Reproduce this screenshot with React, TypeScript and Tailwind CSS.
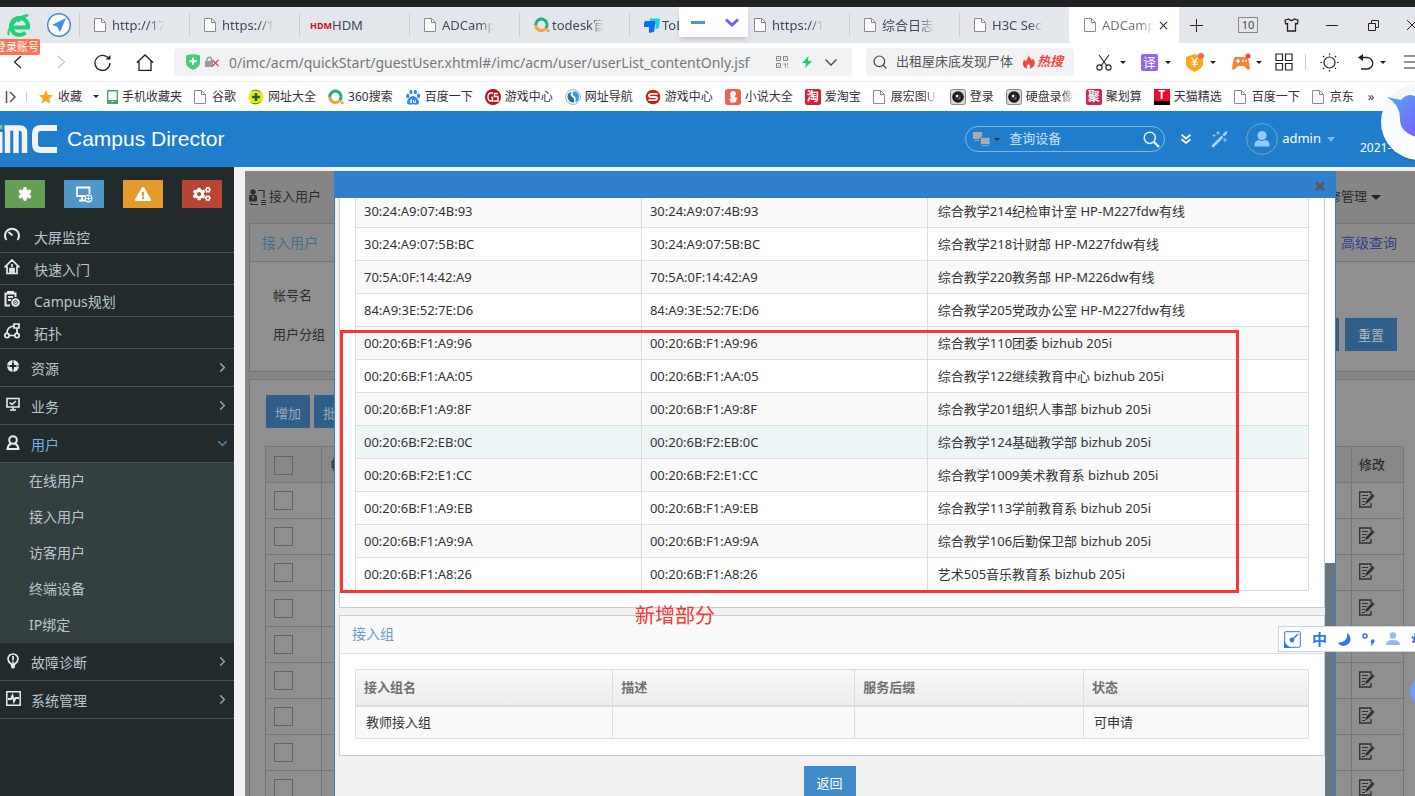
import type { ReactNode } from "react";
import { FaCogs, FaExclamationTriangle } from "react-icons/fa";
import { ChevronDown, ChevronRight, Search } from "lucide-react";

const FONT = "font-['Noto_Sans','Noto_Sans_CJK_SC',sans-serif]";

function Caret({ className = "text-[#222]" }: { className?: string }) {
  return (
    <svg viewBox="0 0 8 4" className={"h-[3px] w-[6px] shrink-0 " + className}>
      <path d="M0 0h8L4 4z" fill="currentColor" />
    </svg>
  );
}

function FileIcon() {
  return (
    <svg viewBox="0 0 12 14" className="mr-[2px] h-[14px] w-[12px] shrink-0" fill="#fff" stroke="#8a8a8a">
      <path d="M.5.5h7l4 4v9H.5z" />
      <path d="M7.5.5v4h4" fill="none" />
    </svg>
  );
}

function RingIcon() {
  return (
    <svg viewBox="0 0 16 16" className="size-4 shrink-0" fill="none" strokeWidth="3">
      <path d="M1.8 8.2a5.6 5.6 0 0 1 11.2-1" stroke="#19b37a" />
      <path d="M13 7.2a5.6 5.6 0 0 1-1.2 4" stroke="#2aa57c" />
      <path d="M1.8 8a5.6 5.6 0 0 0 10 3.4" stroke="#f7a13d" />
      <circle cx="14.2" cy="13.8" r="1.6" fill="#f7a13d" stroke="none" />
    </svg>
  );
}

function ToDeskIcon() {
  return (
    <svg viewBox="0 0 16 15" className="h-[15px] w-4 shrink-0">
      <path d="M6 .5h10l-1 9-3.500 2V6H5z" fill="#18cfe6" />
      <path d="M0 5l1-2h10v4l-1 7-5 1V9H0z" fill="#0b6cf5" />
    </svg>
  );
}

type Tab = { title: string; icon: ReactNode; active?: boolean };
const tabs: Tab[] = [
  { title: "http://17", icon: <FileIcon /> },
  { title: "https://1", icon: <FileIcon /> },
  { title: "HDM", icon: <span className="text-[9px] leading-none font-bold text-[#c8102e]">HDM</span> },
  { title: "ADCamp", icon: <FileIcon /> },
  { title: "todesk官", icon: <RingIcon /> },
  { title: "ToDesk", icon: <ToDeskIcon /> },
  { title: "https://1", icon: <FileIcon /> },
  { title: "综合日志", icon: <FileIcon /> },
  { title: "H3C Sec", icon: <FileIcon /> },
  { title: "ADCamp", icon: <FileIcon />, active: true },
];

function TabBar() {
  return (
    <div className="flex h-9 items-stretch bg-[#e3e6eb]">
      <div className="flex w-[79px] shrink-0 items-center gap-4 pl-[7px]">
        <svg viewBox="0 0 24 24" className="size-6" fill="none">
          <path d="M4 14.5h17a8.5 8.5 0 1 0-2.5 5" stroke="#1fd07e" strokeWidth="4" />
          <path d="M2 22C-1 17 10 3 21 2c-6 3-9 5-10 7" stroke="#1fd07e" strokeWidth="2" />
        </svg>
        <svg viewBox="0 0 24 24" className="size-6">
          <circle cx="12" cy="12" r="11.3" fill="#fff" stroke="#4285dc" strokeWidth="1.4" />
          <path d="M19 5L5 12l5 1.5L13 19z" fill="#3f8ef5" />
        </svg>
      </div>
      {tabs.map((t, i) => (
        <div key={i} className={"flex w-[110px] shrink-0 items-center " + (t.active ? "bg-white" : "")}>
          <span className={"h-6 w-px " + (t.active ? "" : "bg-[#cbced3]")} />
          <button className={"flex min-w-0 items-center " + (t.title === "HDM" ? "pl-2.5" : "pl-[14px]")}>
            <span className={"flex shrink-0 items-center " + (t.title === "HDM" ? "w-[22px]" : "w-[18px]")}>{t.icon}</span>
            <span
              className={
                "w-[52px] overflow-hidden text-left text-[13px] leading-5 whitespace-nowrap " +
                (t.title === "HDM" ? "" : "[mask-image:linear-gradient(to_right,black_72%,transparent)] ") +
                (t.active ? "text-[#777]" : "text-[#404a55]")
              }
            >
              {t.title}
            </span>
          </button>
          {t.active && (
            <button aria-label="关闭标签页" className="ml-[5px]">
              <svg viewBox="0 0 10 10" className="size-[9px]" stroke="#333" strokeWidth="1.2">
                <path d="M1 1l8 8M9 1L1 9" />
              </svg>
            </button>
          )}
        </div>
      ))}
      <div className="flex flex-1 items-center overflow-hidden pl-[11px] text-[#222] [&>button]:shrink-0">
        <button aria-label="新建标签页">
          <svg viewBox="0 0 13 13" className="size-[13px]" stroke="currentColor">
            <path d="M6.5 0v13M0 6.5h13" />
          </svg>
        </button>
        <button className="ml-[35px] h-4 w-5 border border-[#888] text-[11px] leading-[14px] text-[#444]">10</button>
        <button aria-label="皮肤" className="ml-[26px]">
          <svg viewBox="0 0 15 14" className="h-[14px] w-[15px]" fill="none" stroke="currentColor" strokeWidth="1.3">
            <path d="M4.500 1L1 2.200l.600 3.600L3.500 5.500V13h8V5.500l1.900.300.600-3.600L10.500 1Q7.500 4 4.500 1z" />
          </svg>
        </button>
        <button aria-label="最小化" className="ml-[27px] h-px w-3 bg-[#222]" />
        <button aria-label="还原" className="ml-[30px]">
          <svg viewBox="0 0 11 11" className="size-[11px]" fill="none" stroke="currentColor">
            <path d="M.5 3.500h7v7h-7zM3.500 3V.5h7v7H8" />
          </svg>
        </button>
        <button aria-label="关闭" className="ml-[27px]">
          <svg viewBox="0 0 12 12" className="size-3" stroke="currentColor">
            <path d="M1 1l10 10M11 1L1 11" />
          </svg>
        </button>
      </div>
    </div>
  );
}

function Toolbar() {
  return (
    <div className="flex h-[38px] items-center overflow-hidden bg-white text-[#222]">
      <div className="flex w-[174px] shrink-0 items-center pl-[10px]">
        <button aria-label="后退" className="w-[42px]">
          <svg viewBox="0 0 9 14" className="ml-[3px] h-[14px] w-[9px]" fill="none" stroke="#222" strokeWidth="1.2">
            <path d="M8 1L1.500 7 8 13" />
          </svg>
        </button>
        <button aria-label="前进" className="w-[42px]">
          <svg viewBox="0 0 9 14" className="ml-[5px] h-[14px] w-[9px]" fill="none" stroke="#c4c4c4" strokeWidth="1.2">
            <path d="M1 1l6.500 6L1 13" />
          </svg>
        </button>
        <button aria-label="刷新" className="w-[42px]">
          <svg viewBox="0 0 17 17" className="size-[17px]" fill="none" stroke="#222" strokeWidth="1.3">
            <path d="M15 5.200A7.500 7.500 0 1 0 16 9" />
            <path d="M11.500 5.500h5V1z" fill="#222" stroke="none" />
          </svg>
        </button>
        <button aria-label="主页">
          <svg viewBox="0 0 18 17" className="h-[17px] w-[18px]" fill="none" stroke="#222" strokeWidth="1.3">
            <path d="M.8 8.800L9 1l8.200 7.800M3 7v9.300h12V7" />
          </svg>
        </button>
      </div>
      <div className="flex h-7 flex-1 items-center rounded bg-[#f0f2f3] pr-[15px] pl-3">
        <svg viewBox="0 0 14 16" className="h-4 w-[14px] shrink-0">
          <path d="M0 1.500Q7-1 14 1.500V9q0 4-7 7Q0 13 0 9z" fill="#42cf78" />
          <path d="M7 3.800v7M3.500 7.300h7" stroke="#fff" strokeWidth="2" />
        </svg>
        <svg viewBox="0 0 15 12" className="ml-[5px] h-3 w-[15px] shrink-0" fill="none">
          <path d="M0 5h8v6H0z" fill="#9a9a9a" />
          <path d="M2 5V3.500a2.200 2.200 0 0 1 4.500 0V5" stroke="#9a9a9a" strokeWidth="1.400" />
          <path d="M7.500 4l6 6M13.500 4l-6 6" stroke="#d8484c" strokeWidth="1.200" />
        </svg>
        <input
          aria-label="地址栏"
          defaultValue="0/imc/acm/quickStart/guestUser.xhtml#/imc/acm/user/userList_contentOnly.jsf"
          className="ml-[9px] min-w-0 flex-1 bg-transparent text-[14px] text-[#777] outline-none"
        />
        <button aria-label="二维码">
          <svg viewBox="0 0 12 12" className="size-3" fill="none" stroke="#888">
            <path d="M.5.5h4v4h-4zM7.500.5h4v4h-4zM.5 7.500h4v4h-4zM7.500 8h2v3.500M11.500 7v2M11.500 10.500v1M2 2.500h1M9 2.500h1M2 9.500h1" />
          </svg>
        </button>
        <svg viewBox="0 0 10 12" className="ml-[14px] h-3 w-[10px] shrink-0" fill="#1fcf6c">
          <path d="M6.500 0L0 7h4l-1 5 7-7H6z" />
        </svg>
        <button aria-label="展开" className="ml-[13px]">
          <svg viewBox="0 0 12 7" className="h-[7px] w-3" fill="none" stroke="#444" strokeWidth="1.300">
            <path d="M.5.5L6 6 11.500.5" />
          </svg>
        </button>
      </div>
      <div className="ml-[14px] flex h-7 w-[208px] shrink-0 items-center rounded bg-[#f0f2f3] pl-[6px]">
        <Search className="size-4 shrink-0 text-[#444]" strokeWidth={1.8} />
        <input
          aria-label="搜索"
          defaultValue="出租屋床底发现尸体"
          className="ml-2 w-[118px] bg-transparent text-[13px] text-[#555] outline-none"
        />
        <svg viewBox="0 0 14 15" className="ml-2 h-[14px] w-[13px]" fill="#f5483f">
          <path d="M7 0c1 3 3 4 3.500 5.500L12 4c4 5 1 9-3.500 11 1-3 0-4-1.500-6-1 2-3 3-1.500 6C0 13 0 8 2.500 5L4 7c1-2 3-4 3-7z" />
        </svg>
        <span className="ml-[2px] text-[13px] font-bold text-[#f5483f] italic">热搜</span>
      </div>
      <div className="ml-[22px] flex w-[319px] shrink-0 items-center [&>*]:shrink-0">
        <button aria-label="截图" className="flex w-[45px] items-center gap-2">
          <svg viewBox="0 0 16 17" className="h-[17px] w-4" fill="none" stroke="#222" strokeWidth="1.100">
            <path d="M3 1l8 11M13 1L5 12" />
            <circle cx="3.500" cy="13.500" r="2.600" />
            <circle cx="12.500" cy="13.500" r="2.600" />
          </svg>
          <Caret />
        </button>
        <button className="flex w-[45px] items-center gap-[7px]">
          <span className="size-[17px] rounded-[2px] bg-[#9266f0] text-[13px] leading-[17px] text-white">译</span>
          <Caret />
        </button>
        <button aria-label="钱包" className="flex w-[45px] items-center gap-1.5">
          <svg viewBox="0 0 18 19" className="h-[19px] w-[18px]">
            <path d="M0 4l8.500-3L17 4v7q0 4-8.500 8Q0 15 0 11z" fill="#fba71b" />
            <path d="M5.500 4.500l3 4 3-4M8.500 8.500V14M5.500 9h6M5.500 11.300h6" stroke="#fff" strokeWidth="1.200" fill="none" />
            <circle cx="15" cy="3" r="3" fill="#fb6161" />
          </svg>
          <Caret />
        </button>
        <button aria-label="游戏" className="flex w-[44px] items-center gap-[5px]">
          <svg viewBox="0 0 20 18" className="h-[18px] w-5">
            <path d="M4 4h12q2 2 3 12-2 2-4-1l-2-2H7l-2 2q-2 3-4 1Q2 6 4 4z" fill="#fb8332" />
            <path d="M7 6v4M5 8h4" stroke="#fff" strokeWidth="1.500" />
            <circle cx="12" cy="8" r="1" fill="#fff" />
            <circle cx="15" cy="8" r="1" fill="#fff" />
            <circle cx="17" cy="3" r="2.500" fill="#f5453c" />
          </svg>
          <Caret />
        </button>
        <button aria-label="应用" className="mr-3">
          <svg viewBox="0 0 18 18" className="size-[18px]" fill="none" stroke="#222" strokeWidth="1.200">
            <path d="M1 1h6.500v6.500H1zM10.500 1H17v6.500h-6.500zM1 10.500h6.500V17H1zM10.500 10.500H17V17h-6.500z" />
          </svg>
        </button>
        <span className="mr-[14px] h-4 w-px bg-[#ccc]" />
        <button aria-label="亮度" className="mr-[19px]">
          <svg viewBox="0 0 19 19" className="size-[19px]" fill="none" stroke="#222" strokeWidth="1.200">
            <circle cx="9.500" cy="9.500" r="5.500" />
            <path d="M9.500.5v1.500M9.500 17v1.500M.5 9.500H2M17 9.500h1.500M3 3l1.200 1.200M14.800 14.800L16 16M3 16l1.200-1.200M14.800 4.200L16 3" />
          </svg>
        </button>
        <button aria-label="恢复" className="flex items-center gap-[6px]">
          <svg viewBox="0 0 16 16" className="size-4 shrink-0" fill="none" stroke="#222" strokeWidth="1.300">
            <path d="M2 3.500h7a5.500 5.500 0 0 1 0 11.500H3" />
            <path d="M0 3.500L5 0v7z" fill="#222" stroke="none" />
          </svg>
          <Caret />
        </button>
        <button aria-label="菜单" className="ml-[18px]">
          <svg viewBox="0 0 14 14" className="h-[14px] w-[14px]" stroke="#222" strokeWidth="1.200">
            <path d="M0 1h14M0 7h14M0 13h14" />
          </svg>
        </button>
      </div>
    </div>
  );
}

function Disc({ className, children }: { className: string; children: ReactNode }) {
  return (
    <span className={"flex size-4 shrink-0 items-center justify-center text-[12px] leading-none font-bold text-white " + className}>
      {children}
    </span>
  );
}

function Camera() {
  return (
    <svg viewBox="0 0 16 16" className="size-4 shrink-0">
      <rect x=".5" y=".5" width="15" height="15" rx="2" fill="#d8d8d8" stroke="#888" />
      <circle cx="8" cy="8" r="5.800" fill="#1c1c1c" />
      <circle cx="8" cy="8" r="3" fill="#4b3038" />
      <circle cx="7" cy="7" r="1.200" fill="#fff" />
      <circle cx="9.500" cy="9.500" r="1" fill="#2da0a0" />
    </svg>
  );
}

const bookmarks: { label: string; icon: ReactNode }[] = [
  {
    label: "手机收藏夹",
    icon: (
      <svg viewBox="0 0 11 14" className="h-[14px] w-[11px] shrink-0">
        <path d="M.7.7h9.600v12.600H.7z" fill="#fff" stroke="#4aa56b" strokeWidth="1.400" />
        <path d="M1 10h9v3H1z" fill="#4aa56b" />
        <path d="M4.500 11.500h2" stroke="#fff" />
      </svg>
    ),
  },
  { label: "谷歌", icon: <FileIcon /> },
  {
    label: "网址大全",
    icon: (
      <svg viewBox="0 0 16 16" className="size-4 shrink-0">
        <circle cx="8" cy="8" r="7.600" fill="#f2e31c" />
        <path d="M2 3a8 8 0 0 1 12 1Q8 0 2 3zM2 13a8 8 0 0 0 12-1q-6 4-12 1z" fill="#2e9a2a" />
        <path d="M8 4v8M4 8h8" stroke="#0d6b20" strokeWidth="2.600" />
      </svg>
    ),
  },
  { label: "360搜索", icon: <RingIcon /> },
  {
    label: "百度一下",
    icon: (
      <svg viewBox="0 0 16 16" className="size-4 shrink-0" fill="#3388f0">
        <ellipse cx="2.800" cy="7" rx="1.700" ry="2.300" />
        <ellipse cx="6" cy="3" rx="1.600" ry="2.300" />
        <ellipse cx="10.300" cy="3" rx="1.600" ry="2.300" />
        <ellipse cx="13.500" cy="6.800" rx="1.700" ry="2.200" />
        <path d="M8 7c3 0 6 4 6 6.500s-3 2.500-6 1.800c-3 .7-6 .7-6-1.800S5 7 8 7z" />
        <path d="M6.500 10v3.500H5.300v-2M8.500 11v2.500h2V11" stroke="#fff" fill="none" strokeWidth=".9" />
      </svg>
    ),
  },
  {
    label: "游戏中心",
    icon: (
      <svg viewBox="0 0 16 16" className="size-4 shrink-0" fill="none">
        <circle cx="8" cy="8" r="8" fill="#b8141f" />
        <path d="M8 4H6Q3 4 3 8t3 4h1.500V8.500H6M13 4.500H9.500v3H13V12H8.500" stroke="#fff" strokeWidth="1.400" />
      </svg>
    ),
  },
  {
    label: "网址导航",
    icon: (
      <svg viewBox="0 0 16 16" className="size-4 shrink-0" fill="none">
        <circle cx="8" cy="8" r="7.400" fill="#fff" stroke="#aaa" />
        <path d="M8 2.500A3 3 0 0 0 6 7q4 2 3 6.500A6 6 0 0 1 3 5q2-2.500 5-2.500z" fill="#1b6fb5" />
        <path d="M9 2q5 1 5 6t-4 5q2-4-1-6t0-5z" fill="#3a9fd8" />
      </svg>
    ),
  },
  {
    label: "游戏中心",
    icon: (
      <svg viewBox="0 0 16 16" className="size-4 shrink-0" fill="none">
        <circle cx="8" cy="8" r="7.300" fill="#c9230f" />
        <path d="M12.500 4.800H6.500q-2.500 0-2.500 1.600T6 8h4q2 0 2 1.500T9.500 11.200H3.500" stroke="#fff" strokeWidth="1.800" />
      </svg>
    ),
  },
  {
    label: "小说大全",
    icon: (
      <Disc className="rounded-[3px] bg-[#f0604a]">
        <svg viewBox="0 0 12 12" className="size-3" fill="#fff">
          <path d="M3 4q0-4 3-4t3 3l-2 4H4zM2 8l8-2-1 5-5 1z" />
        </svg>
      </Disc>
    ),
  },
  { label: "爱淘宝", icon: <Disc className="rounded-[2px] bg-[#dd1c2d]">淘</Disc> },
  { label: "展宏图U", icon: <FileIcon /> },
  { label: "登录", icon: <Camera /> },
  { label: "硬盘录像", icon: <Camera /> },
  { label: "聚划算", icon: <Disc className="rounded-[2px] bg-[#cf2552]">聚</Disc> },
  { label: "天猫精选", icon: <Disc className="border-b-4 border-black bg-[#f00a2b]">T</Disc> },
  { label: "百度一下", icon: <FileIcon /> },
  { label: "京东", icon: <FileIcon /> },
];

function Bookmarks() {
  return (
    <nav className="flex h-[30px] items-center overflow-hidden border-t border-[#e9ebec] bg-white text-[12px] whitespace-nowrap text-[#333]">
      <svg viewBox="0 0 12 12" className="ml-[5px] h-3 w-3 shrink-0" fill="none" stroke="#555" strokeWidth="1.500">
        <path d="M1.500 0v12M5 1l5 5-5 5" />
      </svg>
      <span className="mr-3 ml-[9px] h-[10px] w-px bg-[#ccc]" />
      <button className="mr-2 flex items-center gap-[5px]">
        <svg viewBox="0 0 14 14" className="size-[14px]" fill="#f9a81c">
          <path d="M7 0l2.100 4.700 4.900.5-3.700 3.300 1.100 5L7 11l-4.400 2.500 1.100-5L0 5.200l4.900-.5z" />
        </svg>
        收藏
        <Caret className="ml-1.5 text-[#222]" />
      </button>
      <div className="flex items-center gap-3">
        {bookmarks.map((b, i) => (
          <a key={i} href="#" className="flex shrink-0 items-center gap-1">
            {b.icon}
            <span
              className={
                b.label === "展宏图U"
                  ? "w-[47px] [mask-image:linear-gradient(to_right,black_70%,transparent)]"
                  : b.label === "硬盘录像"
                    ? "[mask-image:linear-gradient(to_right,black_75%,transparent)]"
                    : ""
              }
            >
              {b.label}
            </span>
          </a>
        ))}
      </div>
      <button className="ml-[14px] text-[13px]">»</button>
    </nav>
  );
}

function AppHeader() {
  return (
    <header className="flex h-14 items-center overflow-hidden bg-[#207dcc] text-white">
      <svg viewBox="0 0 57 30" className="h-[30px] w-[57px] shrink-0" fill="none" stroke="#f1f3f4">
        <path d="M0 8v21" strokeWidth="5" />
        <path d="M0 3h2.500" stroke="#8fc76c" strokeWidth="4" />
        <path d="M4.500 4h15q5 0 5 5v20M7.500 4v25M16 4v25" strokeWidth="5.500" />
        <path d="M57 4H41q-6 0-6 6v10q0 6 6 6h16" strokeWidth="6" />
      </svg>
      <h1 className="ml-[10px] font-['Liberation_Sans',sans-serif] text-[21px] leading-7">Campus Director</h1>
      <div className="ml-auto flex h-[26px] w-[200px] items-center rounded-full border border-[#7fb6e6] pl-[7px]">
        <svg viewBox="0 0 17 16" className="h-4 w-[17px] shrink-0" fill="#a9abad">
          <path d="M0 1h9v7H0zM2 9h4v1H2z" />
          <path d="M7.500 6.500H17v7H7.500zM9 14h7v1.500H9z" stroke="#207dcc" strokeWidth=".6" />
        </svg>
        <Caret className="ml-1 text-[#2c3338]" />
        <input
          aria-label="查询设备"
          placeholder="查询设备"
          className="ml-[9px] min-w-0 flex-1 bg-transparent text-[13px] outline-none placeholder:text-[#c8e0f5]"
        />
        <button aria-label="搜索设备" className="mr-1">
          <svg viewBox="0 0 17 17" className="size-[17px]" fill="none" stroke="#e8f3fc">
            <circle cx="6.800" cy="6.800" r="5.600" strokeWidth="1.500" />
            <path d="M11 11l5 5" strokeWidth="2.400" />
          </svg>
        </button>
      </div>
      <button aria-label="更多" className="ml-4">
        <svg viewBox="0 0 10 10" className="size-[10px]" fill="none" stroke="#fff" strokeWidth="1.800">
          <path d="M.5.8L5 4.500 9.500.8M.5 5.300L5 9l4.500-3.700" />
        </svg>
      </button>
      <button aria-label="向导" className="ml-5">
        <svg viewBox="0 0 18 18" className="size-[18px]" fill="#a8d4f7">
          <path d="M1 15l9.500-9.500 2 2L3 17q-1 .8-1.800 0T1 15zM11.300 4.700l3-3q.9-.7 1.700.1t0 1.800l-2.800 3z" />
          <path d="M7 1v4M5 3h4M3 4v3M1.500 5.500h3M14 8v4M12 10h4" stroke="#a8d4f7" strokeWidth=".8" />
        </svg>
      </button>
      <button className="ml-[17px] flex items-center">
        <svg viewBox="0 0 32 32" className="size-8">
          <circle cx="16" cy="16" r="15.400" fill="none" stroke="#6aa9bf" />
          <circle cx="16" cy="12.500" r="4.600" fill="#93ccff" />
          <path d="M8.500 23.500v-2q0-3.500 4-4.500 3.500 2 7 0 4 1 4 4.500v2z" fill="#93ccff" />
        </svg>
        <span className="ml-1 text-[13px]">admin</span>
        <svg viewBox="0 0 8 5" className="ml-1.5 h-[5px] w-2" fill="#7fb8ea">
          <path d="M0 0h8L4 5z" />
        </svg>
      </button>
      <div className="ml-6 w-14 shrink-0 pl-px text-[12px] leading-[17px]">
        <div className="pl-5">17:32</div>
        <div>2021-11</div>
      </div>
    </header>
  );
}

const iconBase = { fill: "none", stroke: "#e8ecec", strokeWidth: 2 } as const;

const topMenu: { label: string; icon: ReactNode }[] = [
  {
    label: "大屏监控",
    icon: (
      <svg viewBox="0 0 16 16" className="size-4" {...iconBase}>
        <path d="M2.500 13a7 7 0 1 1 11 0M8.500 8.500L4.500 5" />
      </svg>
    ),
  },
  {
    label: "快速入门",
    icon: (
      <svg viewBox="0 0 16 16" className="size-4" {...iconBase} strokeWidth={1.700}>
        <path d="M.5 8.500L8 1l7.500 7.500M3 7v7.500h10V7M8 5v3M6 14V9.500h4V14M8 10v4M6 11.500h4" />
      </svg>
    ),
  },
  {
    label: "Campus规划",
    icon: (
      <svg viewBox="0 0 16 16" className="size-4" {...iconBase} strokeWidth={2}>
        <path d="M6 14.500H1.500v-12h10V6M4 2V1h5v1M4 6h5M4 9h3" />
        <circle cx="11.500" cy="11.500" r="3.300" />
        <circle cx="11.500" cy="11.500" r=".5" />
      </svg>
    ),
  },
  {
    label: "拓扑",
    icon: (
      <svg viewBox="0 0 16 16" className="size-4" {...iconBase} strokeWidth={1.700}>
        <circle cx="3" cy="12.500" r="2.200" />
        <circle cx="13" cy="12.500" r="2.200" />
        <path d="M10 1h5v4h-5zM9.500 3Q3 4 3 10M13 5v5M5.500 12.500h5" />
      </svg>
    ),
  },
];

type Group = { label: string; icon: ReactNode; children?: string[] };
const groups: Group[] = [
  {
    label: "资源",
    icon: (
      <svg viewBox="0 0 14 14" className="size-[14px]">
        <circle cx="7" cy="7" r="6" fill="#e8ecec" />
        <path d="M7 1v3.500M7 9.500V13M1 7h3.500M9.500 7H13" stroke="#222a2c" strokeWidth="1" />
        <path d="M7 4v6M4 7h6" stroke="#222a2c" strokeWidth="2" />
      </svg>
    ),
  },
  {
    label: "业务",
    icon: (
      <svg viewBox="0 0 14 14" className="size-[14px]" {...iconBase} strokeWidth={1.600}>
        <path d="M1 1.500h12v8.500H1zM4 13h6M7 10v3M3.500 5.500l2.500 2 4-3.500" />
      </svg>
    ),
  },
  {
    label: "用户",
    icon: (
      <svg viewBox="0 0 14 16" className="h-4 w-[14px]" {...iconBase}>
        <circle cx="7" cy="5" r="3.800" />
        <path d="M5 8.500Q2 10 1.500 14h11Q12 10 9 8.500" />
      </svg>
    ),
    children: ["在线用户", "接入用户", "访客用户", "终端设备", "IP绑定"],
  },
  {
    label: "故障诊断",
    icon: (
      <svg viewBox="0 0 14 16" className="h-4 w-[14px]" {...iconBase} strokeWidth={1.700}>
        <path d="M5 11Q2 8.500 2 6a5 5 0 0 1 10 0q0 2.500-3 5zM7 3v4.500M7 8.500V10" />
        <path d="M5 11h4v3l-1 1.500H6L5 14z" fill="#e8ecec" stroke="none" />
      </svg>
    ),
  },
  {
    label: "系统管理",
    icon: (
      <svg viewBox="0 0 15 15" className="h-[15px] w-[15px]" {...iconBase} strokeWidth={1.500}>
        <path d="M.8.8h13.400v13.400H.8z" />
        <path d="M2 8h3l1.500-3.500 1.500 6L9.500 7H13" strokeWidth="1.800" />
      </svg>
    ),
  },
];

function Sidebar() {
  return (
    <aside className="w-[234px] shrink-0 bg-[#222a2c] text-[14px] text-[#b9c7cc]">
      <div className="flex gap-[19px] pt-[13px] pb-[13px] pl-[5px] text-white">
        <button aria-label="快捷" className="flex h-7 w-10 items-center justify-center bg-[#659f57]">
          <svg viewBox="0 0 16 16" className="size-4" stroke="#fff" strokeWidth="3.800" strokeLinecap="round">
            <path d="M8 3v10M3.600 5.500l8.800 5M12.400 5.500l-8.800 5" />
          </svg>
        </button>
        <button aria-label="添加设备" className="flex h-7 w-10 items-center justify-center bg-[#4d98c8]">
          <svg viewBox="0 0 17 17" className="size-[17px]" fill="none" stroke="#fff" strokeWidth="1.800">
            <path d="M9 10H1V1.500h12.500V8M3 14.500h6M6 10v4" />
            <circle cx="12.500" cy="12.500" r="3.300" strokeWidth="1.200" />
            <path d="M12.500 10.500v4M10.500 12.500h4" strokeWidth="1.200" />
          </svg>
        </button>
        <button aria-label="告警" className="flex h-7 w-10 items-center justify-center bg-[#e59a2d]">
          <FaExclamationTriangle className="size-4" />
        </button>
        <button aria-label="设置" className="flex h-7 w-10 items-center justify-center bg-[#b74635]">
          <FaCogs className="size-[18px]" />
        </button>
      </div>
      <ul>
        {topMenu.map((m) => (
          <li key={m.label} className="border-b border-[#4b5556]">
            <a href="#" className="flex h-[31px] gap-[14px] pl-1">
              <span className="pt-[6px]">{m.icon}</span>
              <span className="pt-[7px] leading-5">{m.label}</span>
            </a>
          </li>
        ))}
        {groups.map((g) => (
          <li key={g.label}>
            <a href="#" className="flex h-[38px] border-b border-[#4b5556] pr-[6px] pl-[6px]">
              <span className="w-[25px] pt-[10px]">{g.icon}</span>
              <span className={"flex-1 pt-[10px] leading-5 " + (g.children ? "text-[#6cb5e8]" : "")}>{g.label}</span>
              {g.children ? (
                <ChevronDown className="mt-[11px] -mr-[2px] size-[15px] text-[#4f7f9c]" strokeWidth={2.500} />
              ) : (
                <ChevronRight className="mt-[11px] -mr-[2px] size-[15px] text-[#99a5a8]" strokeWidth={2.500} />
              )}
            </a>
            {g.children && (
              <ul className="bg-[#343f40]">
                {g.children.map((c) => (
                  <li key={c}>
                    <a href="#" className="block h-9 pl-[29px] leading-9">
                      {c}
                    </a>
                  </li>
                ))}
              </ul>
            )}
          </li>
        ))}
      </ul>
    </aside>
  );
}

function EditIcon() {
  return (
    <svg viewBox="0 0 16 17" className="h-[17px] w-4" fill="none" stroke="#303030">
      <path d="M12 4V1H.7v15H12v-4" strokeWidth="1.300" />
      <path d="M3 4.500h6M3 7.500h5M3 10.500h3M3 13.500h3" />
      <path d="M6 13l1-3 6.500-7 2 2-6.500 7z" fill="#303030" stroke="none" />
    </svg>
  );
}

function UserListPage() {
  return (
    <div className="h-full overflow-hidden bg-[#858585] pl-1 text-[13px] text-[#2c2c2c]">
      <div className="flex h-[52px] items-center">
        <svg viewBox="0 0 17 17" className="h-[17px] w-[17px]" fill="none" stroke="#2c2c2c">
          <circle cx="4" cy="3" r="2.300" fill="#2c2c2c" />
          <path d="M.5 12V7q0-.5 1-.5h5q1 0 1 .5v5z" fill="#2c2c2c" />
          <path d="M3 7l1 4 1-4" fill="#858585" stroke="none" />
          <path d="M9 1.500h6V9M2 14v1.500h7M12 11.500h5M12 13.500h5M12 15.500h5" strokeWidth="1.200" />
        </svg>
        <span className="ml-[3px]">接入用户</span>
        <button className="mr-[34px] ml-auto flex items-center gap-1">
          检修管理
          <svg viewBox="0 0 10 5" className="h-[5px] w-[10px]" fill="#222">
            <path d="M0 0h10L5 5z" />
          </svg>
        </button>
      </div>
      <section className="h-[149px] border border-r-0 border-[#747474] bg-[#8f8f8f]">
        <div className="flex h-[38px] items-center justify-between border-b border-[#747474] bg-[#8b8b8b] pr-[18px] pl-3 text-[14px]">
          <h2 className="text-[#40708c]">接入用户</h2>
          <a href="#" className="text-[#343f86]">高级查询</a>
        </div>
        <div className="flex justify-between pt-[14px] pr-[18px] pl-[23px]">
          <div>
            <div className="h-[39px] leading-[38px]">帐号名</div>
            <div className="h-[39px] leading-[38px]">用户分组</div>
          </div>
          <div className="mt-[42px] flex gap-[6px]">
            <button className="h-[33px] w-[52px] bg-[#2f5e88] pt-[2px] text-[#aeb4b9]">查询</button>
            <button className="h-[33px] w-[52px] bg-[#2f5e88] pt-[2px] text-[#aeb4b9]">重置</button>
          </div>
        </div>
      </section>
      <section className="mt-[7px] h-[500px] border border-r-0 border-[#747474] bg-[#8f8f8f] pt-[15px] pr-[11px] pl-[15px]">
        <div className="flex gap-1 pl-px">
          <button className="h-[33px] w-11 bg-[#2f5e88] pt-1 text-[#a3a9ad]">增加</button>
          <button className="h-[33px] bg-[#2f5e88] px-[9px] pt-1 text-[#a3a9ad]">批量导入</button>
        </div>
        <table className="mt-[18px] w-full table-fixed border-collapse [&_td]:border [&_td]:border-[#777] [&_th]:border [&_th]:border-[#777]">
          <thead>
            <tr className="h-9 bg-[#888]">
              <th className="w-14 pt-[2px] pl-2 text-left">
                <input type="checkbox" aria-label="全选" className="block size-[19px] appearance-none border border-[#636363]" />
              </th>
              <th className="pl-[9px] text-left">帐号名</th>
              <th className="w-20" />
              <th className="w-[52px] pl-[7px] text-left font-medium">修改</th>
            </tr>
          </thead>
          <tbody>
            {Array.from({ length: 9 }, (_, i) => (
              <tr key={i} className="h-9">
                <td className="pl-2">
                  <input
                    type="checkbox"
                    aria-label={"选择第" + (i + 1) + "行"}
                    className="block size-[19px] appearance-none border border-[#636363]"
                  />
                </td>
                <td />
                <td />
                <td className="pb-[2px] pl-[7px]">
                  <button aria-label="修改" className="block">
                    <EditIcon />
                  </button>
                </td>
              </tr>
            ))}
          </tbody>
        </table>
      </section>
    </div>
  );
}

const rows: [string, string][] = [
  ["30:24:A9:07:4B:93", "综合教学214纪检审计室 HP-M227fdw有线"],
  ["30:24:A9:07:5B:BC", "综合教学218计财部 HP-M227fdw有线"],
  ["70:5A:0F:14:42:A9", "综合教学220教务部 HP-M226dw有线"],
  ["84:A9:3E:52:7E:D6", "综合教学205党政办公室 HP-M227fdw有线"],
  ["00:20:6B:F1:A9:96", "综合教学110团委 bizhub 205i"],
  ["00:20:6B:F1:AA:05", "综合教学122继续教育中心 bizhub 205i"],
  ["00:20:6B:F1:A9:8F", "综合教学201组织人事部 bizhub 205i"],
  ["00:20:6B:F2:EB:0C", "综合教学124基础教学部 bizhub 205i"],
  ["00:20:6B:F2:E1:CC", "综合教学1009美术教育系 bizhub 205i"],
  ["00:20:6B:F1:A9:EB", "综合教学113学前教育系 bizhub 205i"],
  ["00:20:6B:F1:A9:9A", "综合教学106后勤保卫部 bizhub 205i"],
  ["00:20:6B:F1:A8:26", "艺术505音乐教育系 bizhub 205i"],
];

function Modal() {
  return (
    <div className="absolute top-0 right-[79px] bottom-0 left-[89px] flex flex-col border-x border-[#2f80c8] bg-[#f1f1f1] text-[13px] text-[#333]">
      <div className="flex h-[27px] shrink-0 items-center justify-end bg-[#3180cd] pr-[10px]">
        <button aria-label="关闭对话框" className="pt-[3px]">
          <svg viewBox="0 0 10 10" className="size-[10px]" stroke="#56595e" strokeWidth="3">
            <path d="M1.200 1.200l7.600 7.600M8.800 1.200L1.200 8.800" />
          </svg>
        </button>
      </div>
      <div className="flex min-h-0 flex-1">
        <div className="min-w-0 flex-1 overflow-hidden pl-1">
          <section className="border border-t-0 border-[#ccc] bg-white px-[15px] pb-4">
            <table className="-mt-1 w-full table-fixed border-collapse">
              <tbody>
                {rows.map(([mac, desc], i) => (
                  <tr
                    key={mac}
                    className={
                      "h-[33px] [&_td]:border [&_td]:border-[#ddd] [&_td]:pt-[2px] " +
                      (i === 7 ? "bg-[#eef5f7]" : i % 2 ? "bg-white" : "bg-[#f9f9f9]")
                    }
                  >
                    <td className="w-[30%] pl-2">{mac}</td>
                    <td className="w-[30%] pl-2">{mac}</td>
                    <td className="pl-[10px]">{desc}</td>
                  </tr>
                ))}
              </tbody>
            </table>
          </section>
          <section className="mt-[7px] border border-[#ccc] bg-white">
            <h2 className="h-[38px] border-b border-[#ddd] bg-[#f9f9f9] pl-3 text-[14px] leading-[36px] text-[#669fc7]">接入组</h2>
            <div className="px-[15px] pt-[15px] pb-4">
              <table className="w-full table-fixed border-collapse [&_td]:border [&_td]:border-[#ddd] [&_th]:border [&_th]:border-b-2 [&_th]:border-[#ddd]">
                <thead>
                  <tr className="h-9 bg-linear-to-b from-[#f9f9f9] to-[#ebebeb] text-left text-[#707070] [&_th]:pl-2 [&_th]:font-bold">
                    <th className="w-[27%]">接入组名</th>
                    <th>描述</th>
                    <th className="w-[24%]">服务后缀</th>
                    <th className="w-[225px]">状态</th>
                  </tr>
                </thead>
                <tbody>
                  <tr className="h-[33px] bg-[#f9f9f9] [&_td]:pl-[10px]">
                    <td>教师接入组</td>
                    <td />
                    <td />
                    <td>可申请</td>
                  </tr>
                </tbody>
              </table>
            </div>
          </section>
          <div className="mt-[10px] flex justify-center pr-[5px]">
            <button className="h-9 w-[52px] bg-[#428bca] text-white">返回</button>
          </div>
        </div>
        <div className="w-[10px] shrink-0 bg-white pt-[365px]">
          <div className="h-full bg-[#687782]" />
        </div>
      </div>
      <div className="absolute top-[159px] right-[96px] left-[5px] h-[263px] border-[3px] border-[#fd3434]" />
      <div className="absolute top-[431px] left-[300px] text-[20px] leading-7 text-[#fd3434]">新增部分</div>
    </div>
  );
}

function ImeBar() {
  return (
    <div className="absolute top-[626px] right-0 flex h-[26px] w-[137px] items-center gap-[11px] overflow-hidden border border-r-0 border-[#ccd3dc] bg-white pl-[5px] text-[#2f76e6]">
      <svg viewBox="0 0 17 17" className="size-[17px] shrink-0" fill="none" stroke="currentColor">
        <rect x=".7" y=".7" width="15.600" height="15.600" rx="1" />
        <path d="M0 9q2 6 8 8H0z" fill="currentColor" stroke="none" />
        <path d="M8 9l6-6" strokeWidth="1.300" />
        <circle cx="8" cy="9" r="2" fill="currentColor" />
      </svg>
      <span className="text-[15px] font-bold">中</span>
      <svg viewBox="0 0 13 13" className="h-[13px] w-[13px] shrink-0" fill="currentColor">
        <path d="M9 0c6 4 4 12-3 13-3 0-5-1.500-6-3.500C6 10 10 6 9 0z" />
      </svg>
      <svg viewBox="0 0 13 13" className="h-[13px] w-[13px] shrink-0" fill="currentColor">
        <circle cx="3" cy="3" r="2" fill="none" stroke="currentColor" strokeWidth="1.600" />
        <path d="M12.500 7q0 4-4.500 6 1.500-1.500 1.500-2.500A2.300 2.300 0 1 1 12.500 7z" />
      </svg>
      <svg viewBox="0 0 14 14" className="h-[14px] w-[14px] shrink-0" fill="#94b8f4">
        <circle cx="7" cy="3.500" r="3.200" />
        <path d="M0 13q0-5 7-5t7 5z" />
      </svg>
      <svg viewBox="0 0 14 14" className="h-[14px] w-[14px] shrink-0" fill="none" stroke="currentColor">
        <circle cx="7" cy="7" r="3.500" strokeWidth="2.500" />
        <circle cx="7" cy="7" r="5.500" strokeWidth="2" strokeDasharray="2.200 2.100" />
      </svg>
    </div>
  );
}

export default function App() {
  return (
    <div className={"relative flex h-screen flex-col overflow-hidden bg-[#f2f2f2] " + FONT}>
      <div className="h-[7px] shrink-0 bg-[#222]" />
      <div className="shrink-0">
        <TabBar />
        <Toolbar />
        <Bookmarks />
        <AppHeader />
      </div>
      <div className="flex min-h-0 flex-1">
        <Sidebar />
        <main className="relative mt-1 ml-[11px] min-w-0 flex-1">
          <UserListPage />
          <Modal />
        </main>
      </div>

      <div className="absolute top-[39px] left-0 flex h-4 w-10 justify-end overflow-hidden rounded-r-xs bg-[#fc7452] pr-px text-[11px] leading-4 whitespace-nowrap text-white">
        登录账号
      </div>
      <div className="absolute top-[7px] left-[679px] flex h-[30px] w-[69px] items-center justify-between bg-white pr-[9px] pl-3 shadow-md">
        <button aria-label="收起" className="h-[3px] w-[14px] bg-[#4d8dfb]" />
        <button aria-label="展开工具条">
          <svg viewBox="0 0 14 9" className="h-[9px] w-[14px]" fill="none" stroke="#7460f5" strokeWidth="3">
            <path d="M1 1.500l6 5.500 6-5.500" />
          </svg>
        </button>
      </div>
      <div className="absolute top-[84px] -right-[42px] size-[76px] rounded-full bg-linear-to-b from-[#f4f6fa] to-white shadow">
        <svg viewBox="0 0 76 76" className="size-full">
          <defs>
            <linearGradient id="bird" x1="0" y1="0" x2="1" y2="1">
              <stop offset="0" stopColor="#55a8f8" />
              <stop offset="1" stopColor="#7a5cf5" />
            </linearGradient>
          </defs>
          <path d="M6 13l14 3q4-5 10-5l10 3v40Q18 50 19 34 19 21 6 13z" fill="url(#bird)" />
        </svg>
      </div>
      <ImeBar />
      <div className="absolute top-[676px] -right-[25px] size-[30px] rounded-full bg-[#6b9ff8]" />
    </div>
  );
}
